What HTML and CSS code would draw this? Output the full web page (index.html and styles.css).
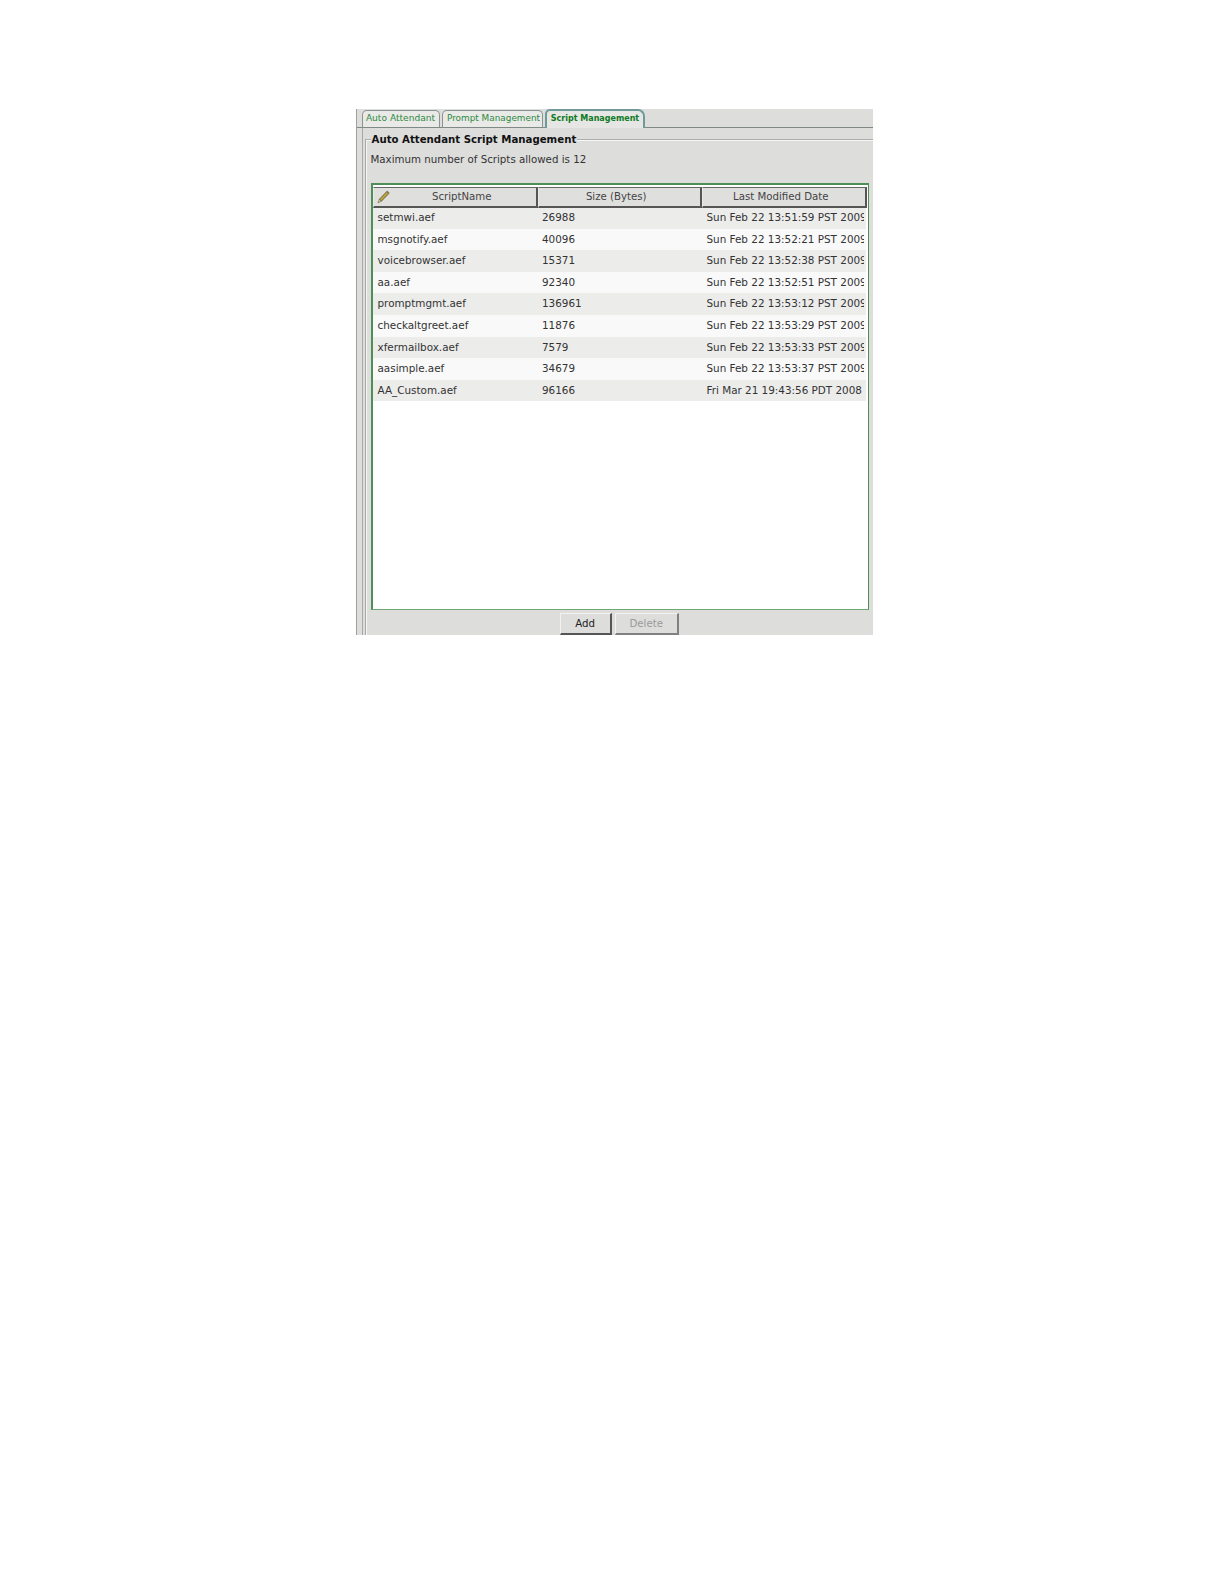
FILE: index.html
```html
<!DOCTYPE html>
<html lang="en">
<head>
<meta charset="utf-8">
<title>Auto Attendant Script Management</title>
<link rel="stylesheet" href="styles.css">
</head>
<body>
<main class="panel">
  <nav class="tabs">
    <span class="tab tab-one">Auto Attendant</span>
    <span class="tab tab-two">Prompt Management</span>
    <span class="tab tab-active">Script Management</span>
  </nav>
  <div class="pane">
  <fieldset class="group">
    <legend class="group-title">Auto Attendant Script Management</legend>
    <p class="limit">Maximum number of Scripts allowed is 12</p>
    <div class="table-box">
      <div class="head">
        <div class="hcell hcell-name">
          <svg class="pencil" viewBox="0 0 14 14" aria-hidden="true">
            <path d="M3.4 9.2 10.8 1.4 13 3.4 5.4 11.2Z" fill="#b9a23c" stroke="#5d5a34" stroke-width=".8"/>
            <path d="M3.4 9.2 2 12.8 5.4 11.2Z" fill="#e5d7a6" stroke="#5d5a34" stroke-width=".6"/>
            <path d="M10.8 1.4 13 3.4" stroke="#8a7a5a" stroke-width="1.6"/>
          </svg>
          ScriptName
        </div>
        <div class="hcell hcell-shift">Size (Bytes)</div>
        <div class="hcell hcell-shift">Last Modified Date</div>
      </div>
      <div class="row"><span>setmwi.aef</span><span>26988</span><span>Sun Feb 22 13:51:59 PST 2009</span></div>
      <div class="row"><span>msgnotify.aef</span><span>40096</span><span>Sun Feb 22 13:52:21 PST 2009</span></div>
      <div class="row"><span>voicebrowser.aef</span><span>15371</span><span>Sun Feb 22 13:52:38 PST 2009</span></div>
      <div class="row"><span>aa.aef</span><span>92340</span><span>Sun Feb 22 13:52:51 PST 2009</span></div>
      <div class="row"><span>promptmgmt.aef</span><span>136961</span><span>Sun Feb 22 13:53:12 PST 2009</span></div>
      <div class="row"><span>checkaltgreet.aef</span><span>11876</span><span>Sun Feb 22 13:53:29 PST 2009</span></div>
      <div class="row"><span>xfermailbox.aef</span><span>7579</span><span>Sun Feb 22 13:53:33 PST 2009</span></div>
      <div class="row"><span>aasimple.aef</span><span>34679</span><span>Sun Feb 22 13:53:37 PST 2009</span></div>
      <div class="row"><span>AA_Custom.aef</span><span>96166</span><span>Fri Mar 21 19:43:56 PDT 2008</span></div>
    </div>
    <div class="actions">
      <button class="btn btn-add" type="button">Add</button>
      <button class="btn btn-delete" type="button" disabled>Delete</button>
    </div>
  </fieldset>
  </div>
</main>
</body>
</html>
```
FILE: styles.css
```css
* { box-sizing: border-box; }
html, body { margin: 0; background: #fff; }
body { padding: 109px 0 0 355.5px; min-height: 1584px; font-family: "DejaVu Sans", sans-serif; }

.panel {
  width: 517px;
  height: 526px;
  background: #dddddc;
  border-left: 1px solid #a0a0a0;
  overflow: hidden;
  color: #222;
}

.tabs {
  display: flex;
  align-items: flex-end;
  height: 19px;
  padding-left: 5px;
  border-bottom: 1px solid #7f8a86;
}
.tab {
  height: 17px;
  margin-right: 2px;
  border: 1px solid #8a9490;
  border-bottom: 0;
  border-radius: 5px 5px 0 0;
  background: #e9e9e8;
  color: #2f8a3f;
  font-size: 9px;
  line-height: 15px;
  text-align: center;
  white-space: nowrap;
}
.tab-one { width: 78px; font-size: 9.1px; }
.tab-two { width: 101px; font-size: 8.9px; padding-left: 3px; }
.tab-active {
  width: 100px;
  height: 19px;
  margin: 0 0 -1px;
  border: 2px solid #6f9a9a;
  border-bottom: 0;
  border-radius: 5px 7px 0 0;
  background: #e6e6e5;
  color: #0e7a22;
  font-weight: 700;
  line-height: 15px;
  font-size: 8px;
  padding-left: 1px;
}

.pane {
  height: 507px;
  margin-left: 5px;
  padding: 4px 0 0 2px;
  border-left: 1px solid #a8a8a8;
}
.group {
  height: 520px;
  margin: 0;
  padding: 0 0 0 5px;
  min-width: 0;
  border: 0;
  border-top: 1px solid #aeaeae;
  border-left: 1px solid #a8a8a8;
  box-shadow: inset 1px 1px 0 #f6f6f6;
}
.group-title {
  padding: 2px 1px 0;
  margin-left: 0;
  background: #dddddc;
  font-size: 10.2px;
  line-height: 12px;
  font-weight: 700;
  color: #111;
}
.limit {
  margin: 7px 0 0;
  font-size: 10.25px;
  line-height: 12px;
  color: #333;
}
.table-box {
  width: 498.5px;
  height: 427px;
  margin: 18px 0 0;
  padding: 2px 2px 0 0;
  background: #fff;
  border: 1px solid #4d8f55;
  border-top-width: 2px;
  border-left-width: 2px;
  border-bottom-color: #6fa874;
  overflow: hidden;
}
.head, .row {
  display: grid;
  grid-template-columns: 165.5px 163.5px 165.5px;
}
.head { height: 20px; }
.hcell {
  position: relative;
  border: 1px solid #e9e9e9;
  border-right: 2px solid #555;
  border-bottom: 2px solid #555;
  border-top-color: #666;
  background: #dfdfde;
  font-size: 10.2px;
  line-height: 18px;
  text-align: center;
  color: #444;
}
.hcell-name { padding-left: 14px; }
.hcell-shift { padding-right: 6px; }
.pencil {
  position: absolute;
  left: 2px;
  top: 2px;
  width: 14px;
  height: 14px;
}
.row {
  height: 21.6px;
  font-size: 10.4px;
  line-height: 21px;
  color: #333;
}
.row:nth-child(even) { background: #ececeb; }
.row:nth-child(odd) { background: #f9f9f9; }
.row span {
  padding-left: 4px;
  white-space: nowrap;
  overflow: hidden;
}
.row span:first-child { padding-left: 5px; }
.row span:last-child {
  padding-left: 5px;
  margin-right: 3px;
}

.actions {
  display: flex;
  gap: 3.5px;
  margin: 3px 0 0 189px;
}
.btn {
  height: 22px;
  padding: 0;
  background: #dddddc;
  border: 1px solid #f2f2f2;
  border-right: 2px solid #555;
  border-bottom: 2px solid #555;
  font-family: inherit;
  font-size: 10.2px;
  color: #222;
}
.btn-add { width: 52px; }
.btn-delete { width: 63.5px; color: #9a9a9a; border-right-color: #808080; border-bottom-color: #808080; }
```
